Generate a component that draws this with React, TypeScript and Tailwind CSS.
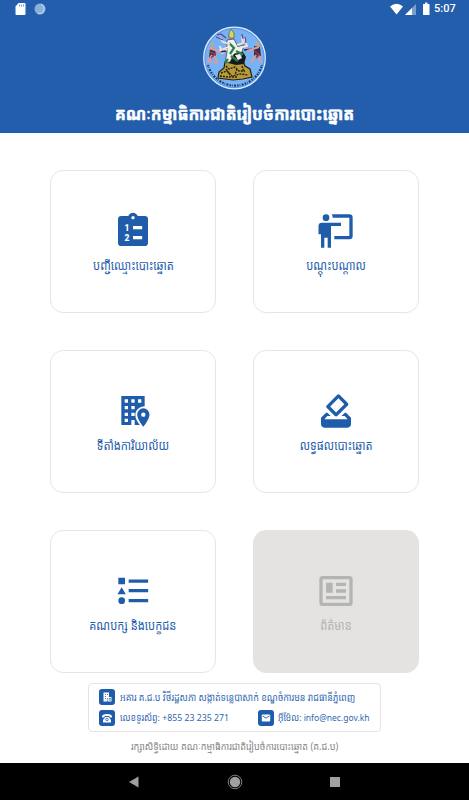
import type { ReactNode } from "react"

const ink = "#1f5dab"

function Icon({ children }: { children: ReactNode }) {
    return <svg viewBox="0 0 24 24" className="h-10 w-10 shrink-0" fill="currentColor">{children}</svg>
}

function VoterListIcon() {
    return <Icon>
        <path fillRule="evenodd" d="M19 3h-4.18C14.4 1.84 13.3 1 12 1S9.6 1.84 9.18 3H5a2 2 0 0 0-2 2v14a2 2 0 0 0 2 2h14a2 2 0 0 0 2-2V5a2 2 0 0 0-2-2zm-7 0a1 1 0 1 1 0 2 1 1 0 0 1 0-2z" />
        <path fill="white" d="M12 9h5.500v2H12zM12 15h5.500v2H12z" />
        <text x="6.9" y="12" fill="white" fontSize="5.1" fontWeight="900" fontFamily="Roboto, sans-serif">1</text>
        <text x="6.9" y="18.200" fill="white" fontSize="5.1" fontWeight="900" fontFamily="Roboto, sans-serif">2</text>
    </Icon>
}

function TrainingIcon() {
    return <Icon>
        <path d="M20 17a2 2 0 0 0 2-2V4a2 2 0 0 0-2-2H9.46c.35.61.54 1.3.54 2h10v11h-9v2M15 7v2H9v13H7v-6H5v6H3v-8H1.5V9a2 2 0 0 1 2-2H15M8 4a2 2 0 1 1-4 0 2 2 0 0 1 4 0z" />
    </Icon>
}

function OfficeIcon() {
    return <Icon>
        <path d="M5 3h14v6.2c-3 0-5.6 2.300-5.600 5.200 0 2.300 1.300 4.200 2.700 6H13v-3h-2v3H5zM7 5v2h2V5zm4 0v2h2V5zm4 0v2h2V5zM7 9v2h2V9zm4 0v2h2V9zM7 13v2h2v-2zm4 0v2h2v-2zM7 16.600v2h2v-2z" fillRule="evenodd" />
        <path d="M18.200 10.400a3.700 3.700 0 0 0-3.700 3.700c0 2.800 3.700 7.400 3.700 7.400s3.700-4.600 3.700-7.400a3.700 3.700 0 0 0-3.700-3.700zm0 5.100a1.300 1.300 0 1 1 0-2.600 1.300 1.300 0 0 1 0 2.600z" />
    </Icon>
}

function ResultIcon() {
    return <Icon>
        <path d="M18 13h-.68l-2 2h1.910L19 17H5l1.780-2h2.050l-2-2H6l-3 3v4c0 1.100.89 2 1.990 2H19c1.100 0 2-.89 2-2v-4l-3-3zm-1-5.050l-4.950 4.950-3.540-3.540 4.950-4.950L17 7.950zm-4.240-5.660L6.390 8.660a1 1 0 0 0 0 1.410l4.950 4.950c.39.39 1.020.39 1.410 0l6.360-6.360a1 1 0 0 0 0-1.410L14.160 2.300a.97.97 0 0 0-1.400-.01z" />
    </Icon>
}

function PartyIcon() {
    return <Icon>
        <path d="M3.200 4h4v3.900h-4zM5.200 9.700l2.500 4.200h-5zM9.400 5.100h11.700v2H9.400zM9.400 10.800h11.700v2H9.400zM9.400 16.800h11.700v2H9.400z" />
        <circle cx="5.200" cy="17.800" r="2" />
    </Icon>
}

function NewsIcon() {
    return <Icon>
        <path d="M20 5v14H4V5h16m0-2H4a2 2 0 0 0-2 2v14a2 2 0 0 0 2 2h16a2 2 0 0 0 2-2V5a2 2 0 0 0-2-2m-2 12H6v2h12v-2M10 7H6v6h4V7m2 2h6V7h-6v2m6 2h-6v2h6v-2z" />
    </Icon>
}

const menu = [
    { label: "បញ្ជីឈ្មោះបោះឆ្នោត", icon: <VoterListIcon /> },
    { label: "បណ្ដុះបណ្ដាល", icon: <TrainingIcon /> },
    { label: "ទីតាំងការិយាល័យ", icon: <OfficeIcon /> },
    { label: "លទ្ធផលបោះឆ្នោត", icon: <ResultIcon /> },
    { label: "គណបក្ស និងបេក្ខជន", icon: <PartyIcon /> },
    { label: "ព័ត៌មាន", icon: <NewsIcon />, disabled: true },
]

function MenuCard({ label, icon, disabled }: { label: string, icon: ReactNode, disabled?: boolean }) {
    return <button type="button" disabled={disabled} className={disabled
        ? "flex h-[143px] flex-col items-center rounded-[13px] border border-[#e4e3e2] bg-[#e4e3e2] pt-10 text-[#b4b4b3]"
        : "flex h-[143px] flex-col items-center rounded-[13px] border border-[#e6e6e6] bg-white pt-10 text-[#1f5dab]"}>
        {icon}
        <span className="mt-[5px] scale-x-[0.93] scale-y-[1.12] text-[12px] leading-5 whitespace-nowrap">{label}</span>
    </button>
}

function StatusBar() {
    return <div className="flex h-[18px] items-center justify-between pr-3 pl-[15px]">
        <div className="flex items-center gap-2">
            <svg width="11" height="12" viewBox="0 0 11 12">
                <path fill="white" d="M3.500 0H9.500a1 1 0 0 1 1 1v10a1 1 0 0 1-1 1h-8a1 1 0 0 1-1-1V3.500z" />
                <path stroke="#6b97cf" d="M4.500 1.500v2M6.500 1.500v2M8.500 1.500v2" />
            </svg>
            <svg width="12" height="12" viewBox="0 0 12 12">
                <circle cx="6" cy="6" r="5.500" fill="#8cb0dc" />
                <path fill="none" stroke="#c9dbf0" d="M7 1a5 5 0 0 1-3 9.500" />
            </svg>
        </div>
        <div className="flex items-center">
            <svg width="42" height="14" viewBox="0 0 42 14" fill="white">
                <path d="M0 4.500Q6.500-.8 13 4.500L6.500 12.500z" />
                <path opacity=".4" d="M26 2v11H15z" />
                <path d="M22 6v7h-7z" />
                <path d="M35 .500h2.500v1.500H39.500V13h-6.500V2H35z" />
            </svg>
            <span className="ml-0.5 w-[23px] font-[Roboto] text-[11px] leading-4 font-medium text-white">5:07</span>
        </div>
    </div>
}

// seal of the committee: central deity on a rock between two guards
function Seal() {
    return <svg width="64" height="64" viewBox="0 0 64 64" className="mt-2">
        <defs>
            <path id="motto" d="M5 39a28 28 0 0 0 54 0" />
        </defs>
        <circle cx="31.500" cy="32" r="30.800" fill="#77b3f4" stroke="#dcecff" strokeWidth="1.300" />
        <circle cx="31.500" cy="32" r="29.600" fill="none" stroke="#4a7fc4" strokeWidth=".6" />
        <path d="M22 36l9-2 9 1 2 5 5 3 2 8-9 2-10 1-15-2 1-6 5-4z" fill="#b69b38" stroke="#211f16" strokeWidth="1.200" />
        <path d="M23 40l3 3 6-2 4 4 6 0M18 47l6-2 5 5 8-2 8 1M23 43l4 6M34 43l-2 6M39 40l2 6M17 50l8 1 9 0" fill="none" stroke="#241f10" strokeWidth="1.400" strokeDasharray="2 1" />
        <path d="M25 28l8-3 7 1 3 5-2 7-8 1-8-2z" fill="#191919" />
        <path d="M24 14l7-1 4 8 6-2-2 7-8 2-4 8-5 1 2-11z" fill="#f2f2e7" stroke="#333" strokeWidth=".7" />
        <path d="M26 17l5 5-4 6M33 25l6 3-4 5M28 30l7 5M25 33l-3 4" fill="none" stroke="#24815c" strokeWidth="2.300" />
        <path d="M32 29l5-1 2 4-4 2z" fill="#f0eee6" />
        <path d="M26 12V7l2-4 3 4v5z" fill="#d6d65b" stroke="#444" strokeWidth=".6" />
        <path d="M27 18l-7-2-3-4M25 21l-7 3-1-4M34 19l6-2-1-6M35 22l9-2-3-8M24 23l-5 4-3-3" fill="none" stroke="#f6e5db" strokeWidth="1.800" />
        <path d="M14 9l4-1 5 4M13 11l7 3M39 8l1 5M42 11l1 6" fill="none" stroke="#6d3f83" strokeWidth="1.200" />
        <path d="M17 26l6-1M41 24l10-1" stroke="#242745" strokeWidth="1.600" />
        <path d="M7 22l5 1 1 7-7 2zM51 20l6 1 1 9-7 1z" fill="#34314a" />
        <path d="M6 22l12 4M9 29l-4 6 4 1M11 29l3 7-3 1M44 25l12-4M53 29l-5 8M56 29l2 8" fill="none" stroke="#e39a99" strokeWidth="2" />
        <path d="M9 17v4M55 16v4" stroke="#c9a877" strokeWidth="3" />
        <path d="M7 26l5 2-4 4M52 25l4 4-3 3" fill="none" stroke="#a53544" strokeWidth="1.600" />
        <use href="#motto" fill="none" stroke="#1c376f" strokeWidth="2.200" strokeDasharray="1.500 1 .7 1.300 2 1.200" />
    </svg>
}

function ContactBadge({ children }: { children: ReactNode }) {
    return <span className="flex h-4 w-4 shrink-0 items-center justify-center rounded-[3px] bg-[#1f5dab]">
        <svg width="12" height="12" viewBox="0 0 12 12" fill="white">{children}</svg>
    </span>
}

export default function App() {
    return <div className="flex h-screen w-full flex-col overflow-hidden bg-white font-['Noto_Sans_Khmer','Noto_Sans',sans-serif]">
        <header className="flex h-[133px] shrink-0 flex-col bg-[#225eac]">
            <StatusBar />
            <div className="flex flex-col items-center">
                <Seal />
                <h1 className="mt-[11px] scale-y-110 text-[16px] leading-6 font-bold whitespace-nowrap text-white [-webkit-text-stroke:0.5px_white]">គណៈកម្មាធិការជាតិរៀបចំការបោះឆ្នោត</h1>
            </div>
        </header>

        <main className="grid grid-cols-2 gap-x-[37px] gap-y-[37px] pt-[37px] pr-[50px] pl-[50px]">
            {menu.map((item) => <MenuCard key={item.label} {...item} />)}
        </main>

        <footer className="flex flex-1 flex-col items-center pt-[10px]">
            <div className="flex h-[49px] w-[293px] flex-col gap-[5px] rounded border border-[#e4e4e4] pt-[5px] pl-[10px] text-[9px] leading-4 whitespace-nowrap text-[#2f67b1]">
                <div className="flex h-4 items-center gap-[5px]">
                    <ContactBadge>
                        <path d="M2.500 1.500h5.500v4L6.500 7v3.500h-4z" />
                        <path d="M7 6h3.500v4.500H7z" />
                        <path stroke={ink} strokeWidth=".8" d="M4 3.500h1M6 3.500h1M4 5.500h1M4 7.500h1M7.800 7.500h2M7.800 9h2" />
                    </ContactBadge>
                    <span className="origin-left scale-x-[0.99] scale-y-[1.18]">អគារ គ.ជ.ប វិថីរដ្ឋសភា សង្កាត់ទន្លេបាសាក់ ខណ្ឌចំការមន រាជធានីភ្នំពេញ</span>
                </div>
                <div className="flex h-4 items-center">
                    <div className="flex w-[159px] items-center gap-[5px]">
                        <ContactBadge>
                            <path d="M1 4.500Q1 2 6 2t5 2.500l-.5 1.200-2-.4-.3-1.300H3.800l-.3 1.300-2 .4z" />
                            <path d="M4.300 5h3.400l2.300 3v2.500H2V8z" />
                            <circle cx="6" cy="7.500" r="1.200" fill="white" stroke={ink} strokeWidth=".8" />
                        </ContactBadge>
                        <span className="origin-left scale-x-[0.97] scale-y-[1.08]">លេខទូរស័ព្ទ: +855 23 235 271</span>
                    </div>
                    <div className="flex items-center gap-1">
                        <ContactBadge>
                            <rect x="1.800" y="2.500" width="8.400" height="7" rx=".8" />
                            <path fill="none" stroke={ink} strokeWidth=".9" d="M2.500 3.800L6 6.200l3.500-2.400" />
                        </ContactBadge>
                        <span className="origin-left scale-x-[0.945] scale-y-[1.08]">អ៊ីម៉ែល: info@nec.gov.kh</span>
                    </div>
                </div>
            </div>
            <p className="mt-[5px] scale-x-[0.963] scale-y-[1.1] text-[9.500px] leading-5 whitespace-nowrap text-[#858585]">រក្សាសិទ្ធិដោយ គណៈកម្មាធិការជាតិរៀបចំការបោះឆ្នោត (គ.ជ.ប)</p>
        </footer>

        <nav className="flex h-[37px] shrink-0 items-center justify-between bg-black pr-[129px] pl-[128px]">
            <svg width="11" height="12" viewBox="0 0 11 12"><path fill="#a0a0a0" d="M10.500 .500v11L1 6z" /></svg>
            <svg width="16" height="16" viewBox="0 0 16 16">
                <circle cx="8" cy="8" r="5.200" fill="#a0a0a0" />
                <circle cx="8" cy="8" r="6.800" fill="none" stroke="#a0a0a0" strokeWidth=".8" />
            </svg>
            <span className="h-[10px] w-[10px] bg-[#a0a0a0]" />
        </nav>
    </div>
}
